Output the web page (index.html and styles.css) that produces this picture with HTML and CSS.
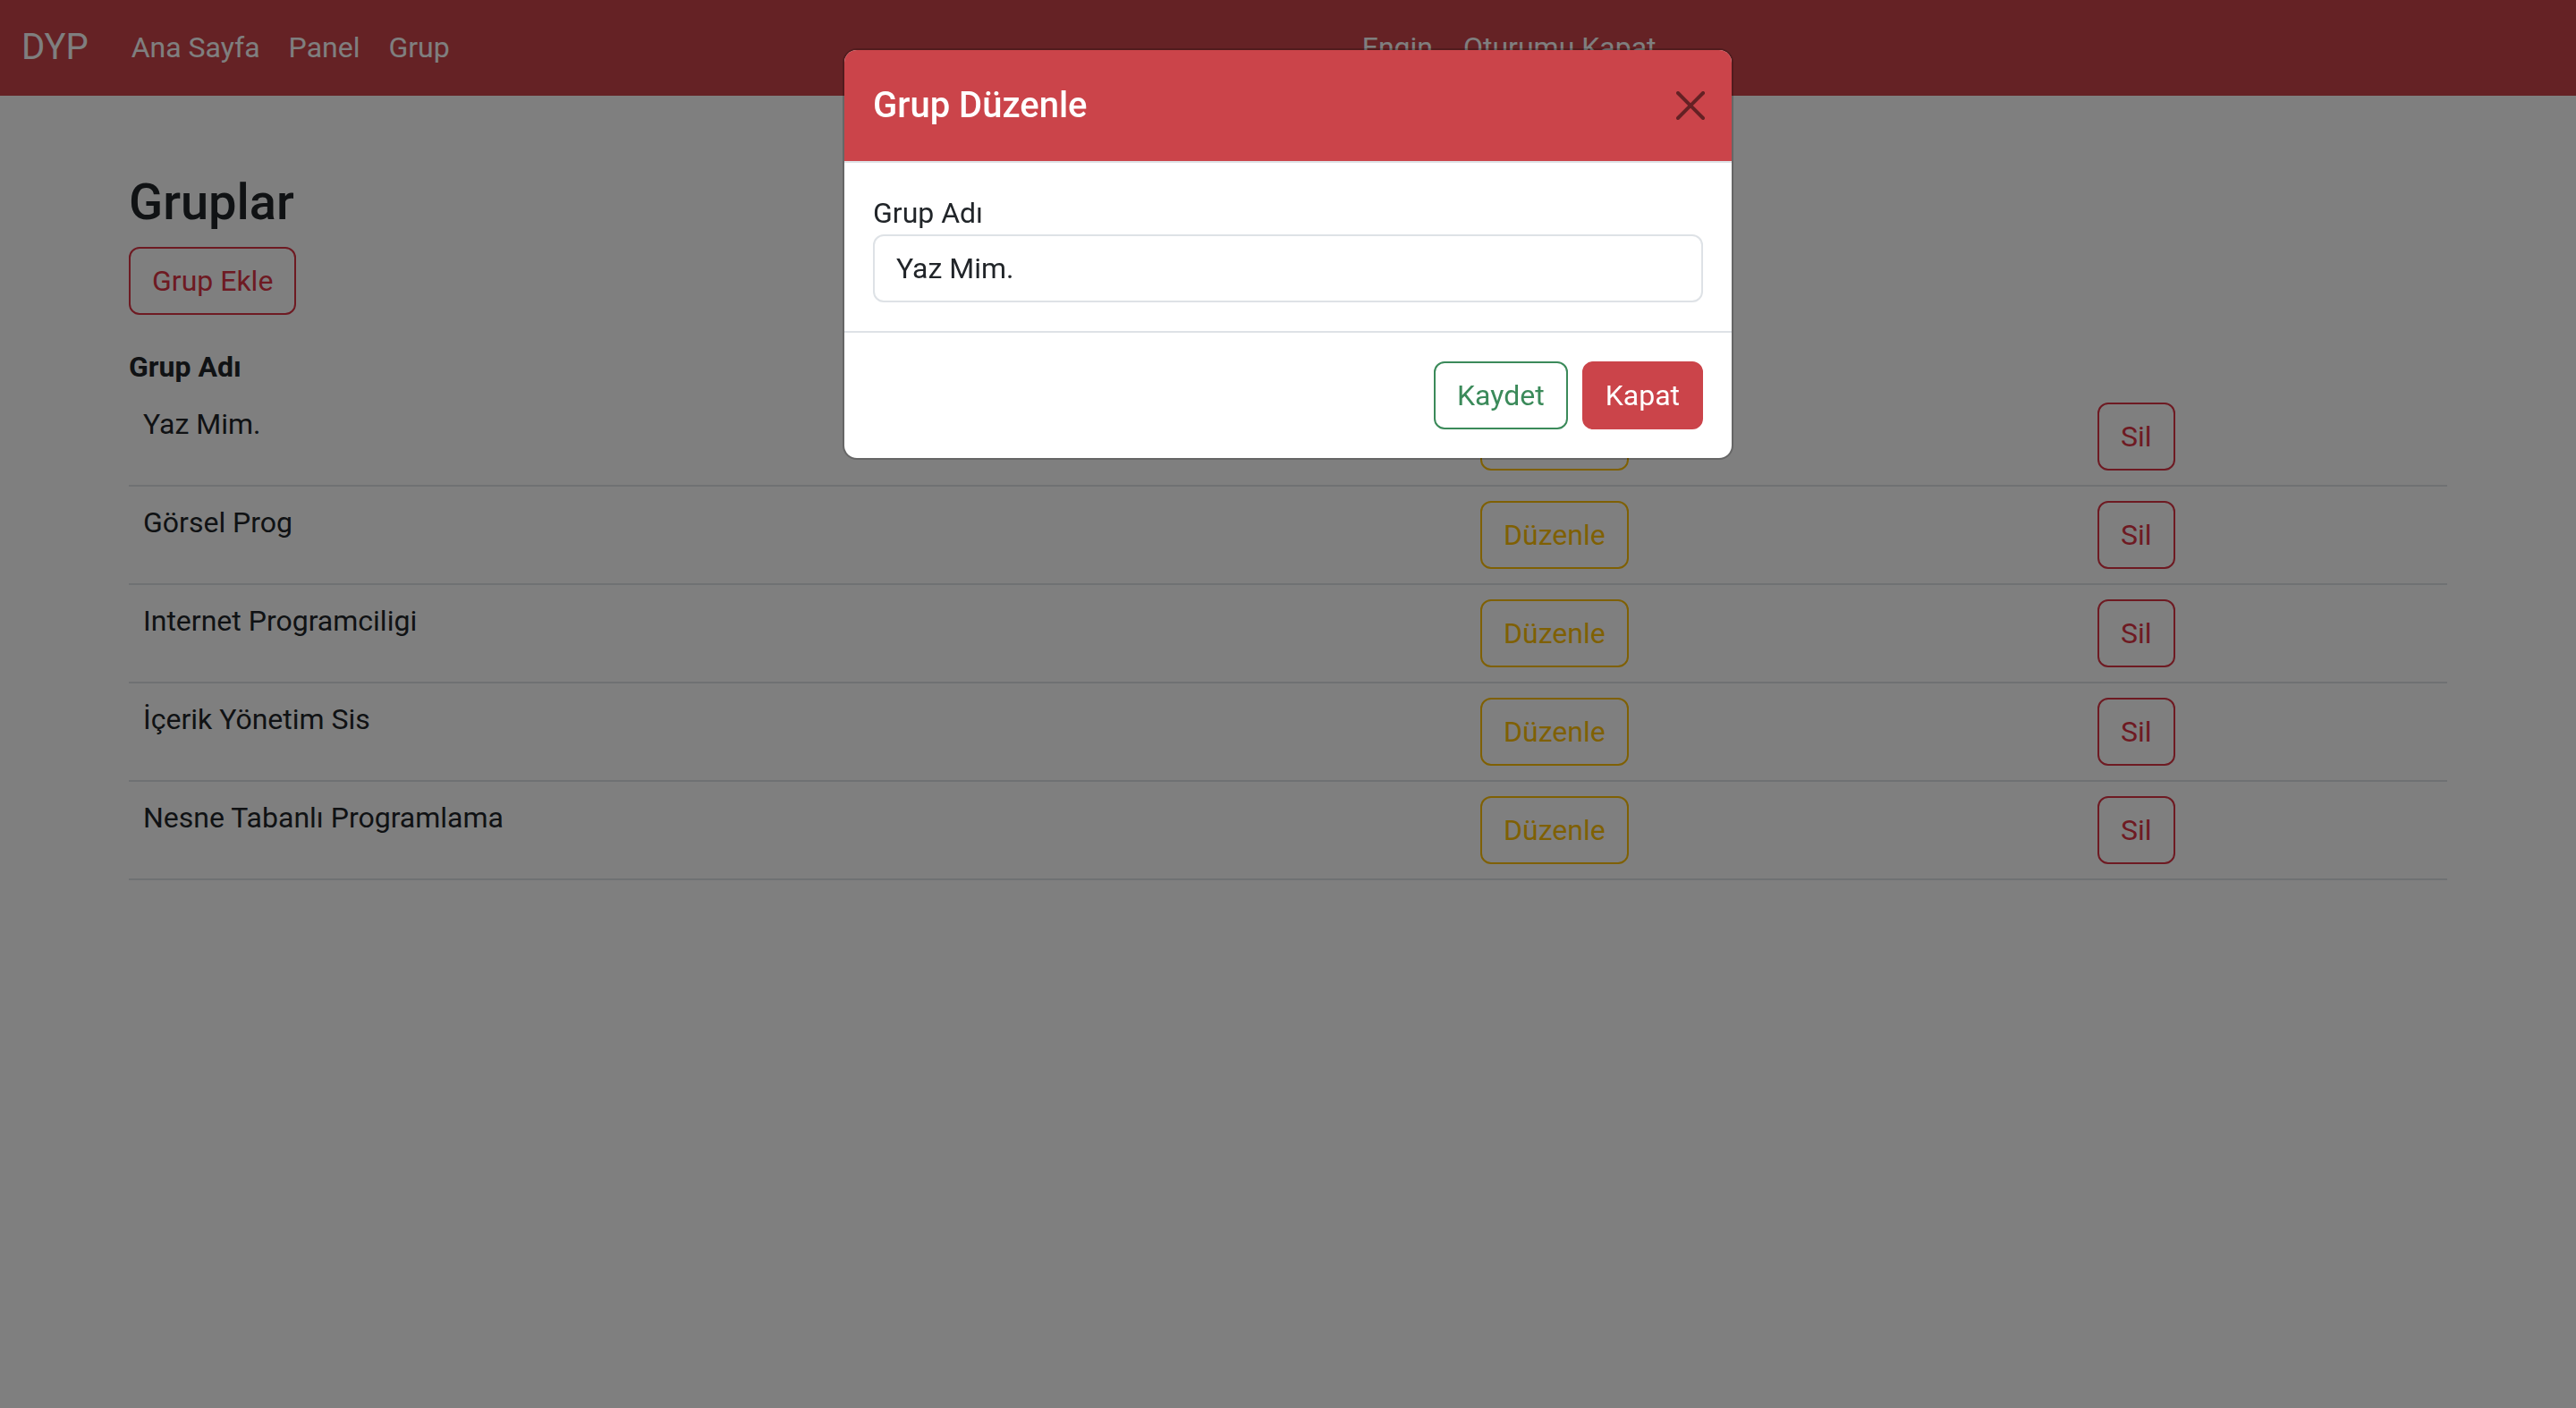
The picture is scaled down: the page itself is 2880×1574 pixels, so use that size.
FILE: index.html
```html
<!DOCTYPE html>
<html lang="tr">
<head>
<meta charset="utf-8">
<title>Gruplar</title>
<link rel="stylesheet" href="styles.css">
</head>
<body>
<nav class="navbar">
  <a class="brand" href="#">DYP</a>
  <ul class="nav">
    <li><a class="nav-link" href="#">Ana Sayfa</a></li>
    <li><a class="nav-link" href="#">Panel</a></li>
    <li><a class="nav-link" href="#">Grup</a></li>
  </ul>
  <ul class="nav nav-right">
    <li><a class="nav-link" href="#">Engin</a></li>
    <li><a class="nav-link" href="#">Oturumu Kapat</a></li>
  </ul>
</nav>

<main class="container">
  <h3 class="page-title">Gruplar</h3>
  <button class="btn btn-outline-danger">Grup Ekle</button>
  <div class="table-head">Grup Adı</div>
  <table class="table">
    <colgroup>
      <col class="col-name">
      <col class="col-edit">
      <col class="col-del">
    </colgroup>
    <tbody>
      <tr><td>Yaz Mim.</td><td><button class="btn btn-outline-warning">Düzenle</button></td><td><button class="btn btn-outline-danger">Sil</button></td></tr>
      <tr><td>Görsel Prog</td><td><button class="btn btn-outline-warning">Düzenle</button></td><td><button class="btn btn-outline-danger">Sil</button></td></tr>
      <tr><td>Internet Programciligi</td><td><button class="btn btn-outline-warning">Düzenle</button></td><td><button class="btn btn-outline-danger">Sil</button></td></tr>
      <tr><td>İçerik Yönetim Sis</td><td><button class="btn btn-outline-warning">Düzenle</button></td><td><button class="btn btn-outline-danger">Sil</button></td></tr>
      <tr><td>Nesne Tabanlı Programlama</td><td><button class="btn btn-outline-warning">Düzenle</button></td><td><button class="btn btn-outline-danger">Sil</button></td></tr>
    </tbody>
  </table>
</main>

<div class="backdrop"></div>

<div class="modal">
  <div class="modal-dialog">
    <div class="modal-content">
      <div class="modal-header">
        <h5 class="modal-title">Grup Düzenle</h5>
        <button class="btn-close" aria-label="Close">
          <svg viewBox="0 0 16 16" width="32" height="32"><path d="M.293.293a1 1 0 0 1 1.414 0L8 6.586 14.293.293a1 1 0 1 1 1.414 1.414L9.414 8l6.293 6.293a1 1 0 0 1-1.414 1.414L8 9.414l-6.293 6.293a1 1 0 0 1-1.414-1.414L6.586 8 .293 1.707a1 1 0 0 1 0-1.414z"/></svg>
        </button>
      </div>
      <div class="modal-body">
        <label class="form-label">Grup Adı</label>
        <input class="form-control" type="text" value="Yaz Mim.">
      </div>
      <div class="modal-footer">
        <button class="btn btn-outline-success">Kaydet</button>
        <button class="btn btn-danger">Kapat</button>
      </div>
    </div>
  </div>
</div>
</body>
</html>
```

FILE: styles.css
```css
* { box-sizing: border-box; }

html, body {
  margin: 0;
  padding: 0;
  height: 100%;
}

body {
  font-family: Roboto, "Liberation Sans", Arial, sans-serif;
  font-size: 32px;
  line-height: 48px;
  color: #212529;
  background: #ffffff;
}

a { text-decoration: none; }

/* Navbar */
.navbar {
  height: 107px;
  background: #cb444a;
  display: flex;
  align-items: center;
  padding: 0 24px 2px;
}

.brand {
  color: #ffffff;
  font-size: 40px;
  line-height: 60px;
  margin-right: 32px;
}

.nav {
  list-style: none;
  margin: 0;
  padding: 0;
  display: flex;
}

.nav-link {
  display: block;
  padding: 8px 16px;
  color: #ffffff;
  font-size: 32px;
  line-height: 48px;
}

.nav-right {
  margin-left: 987px;
}

.nav-right .nav-link {
  padding: 8px 17px;
}

/* Content */
.container {
  padding: 86px 144px 0;
}

.page-title {
  margin: 0 0 16px;
  font-size: 56px;
  line-height: 67px;
  font-weight: 500;
}

.btn {
  display: inline-block;
  font-family: inherit;
  font-size: 32px;
  line-height: 48px;
  padding: 12px 24px;
  border: 2px solid transparent;
  border-radius: 12px;
  background: transparent;
  cursor: pointer;
}

.btn-outline-danger {
  color: #dc3545;
  border-color: #dc3545;
}

.btn-outline-warning {
  color: #ffc107;
  border-color: #ffc107;
}

.btn-outline-success {
  color: #3b8a5a;
  border-color: #3b8a5a;
  background: #ffffff;
}

.btn-danger {
  color: #ffffff;
  background: #cb444a;
  border-color: #cb444a;
}

.table-head {
  margin-top: 34px;
  font-weight: 700;
  line-height: 48px;
}

.table {
  width: 100%;
  border-collapse: collapse;
  table-layout: fixed;
}

.col-name { width: 1495px; }
.col-edit { width: 690px; }
.col-del { width: auto; }

.table td {
  padding: 16px;
  vertical-align: top;
  border-bottom: 2px solid #dee2e6;
}

/* Backdrop + modal */
.backdrop {
  position: fixed;
  inset: 0;
  background: rgba(0, 0, 0, 0.5);
}

.modal {
  position: fixed;
  inset: 0;
  display: flex;
  justify-content: center;
  align-items: flex-start;
}

.modal-dialog {
  width: 996px;
  margin-top: 54px;
}

.modal-content {
  background: #ffffff;
  border: 2px solid rgba(0, 0, 0, 0.2);
  border-radius: 16px;
  overflow: hidden;
  background-clip: padding-box;
}

.modal-header {
  display: flex;
  align-items: center;
  padding: 32px;
  background: #cb444a;
  border-bottom: 2px solid #dee2e6;
}

.modal-title {
  margin: 0;
  flex: 1;
  color: #ffffff;
  font-size: 40px;
  line-height: 60px;
  font-weight: 500;
}

.btn-close {
  width: 48px;
  height: 48px;
  padding: 8px;
  margin: -16px -10px -16px auto;
  border: 0;
  background: transparent;
  opacity: 0.5;
  display: flex;
  align-items: center;
  justify-content: center;
}

.btn-close svg {
  display: block;
  fill: #000000;
}

.modal-body {
  padding: 32px;
}

.form-label {
  display: block;
  margin: 0;
  font-size: 32px;
  line-height: 48px;
}

.form-control {
  display: block;
  width: 100%;
  font-family: inherit;
  font-size: 32px;
  line-height: 48px;
  padding: 12px 24px;
  color: #212529;
  border: 2px solid #dee2e6;
  border-radius: 12px;
  background: #ffffff;
}

.modal-footer {
  display: flex;
  justify-content: flex-end;
  align-items: center;
  padding: 24px;
  border-top: 2px solid #dee2e6;
}

.modal-footer .btn {
  margin: 8px;
}
```
